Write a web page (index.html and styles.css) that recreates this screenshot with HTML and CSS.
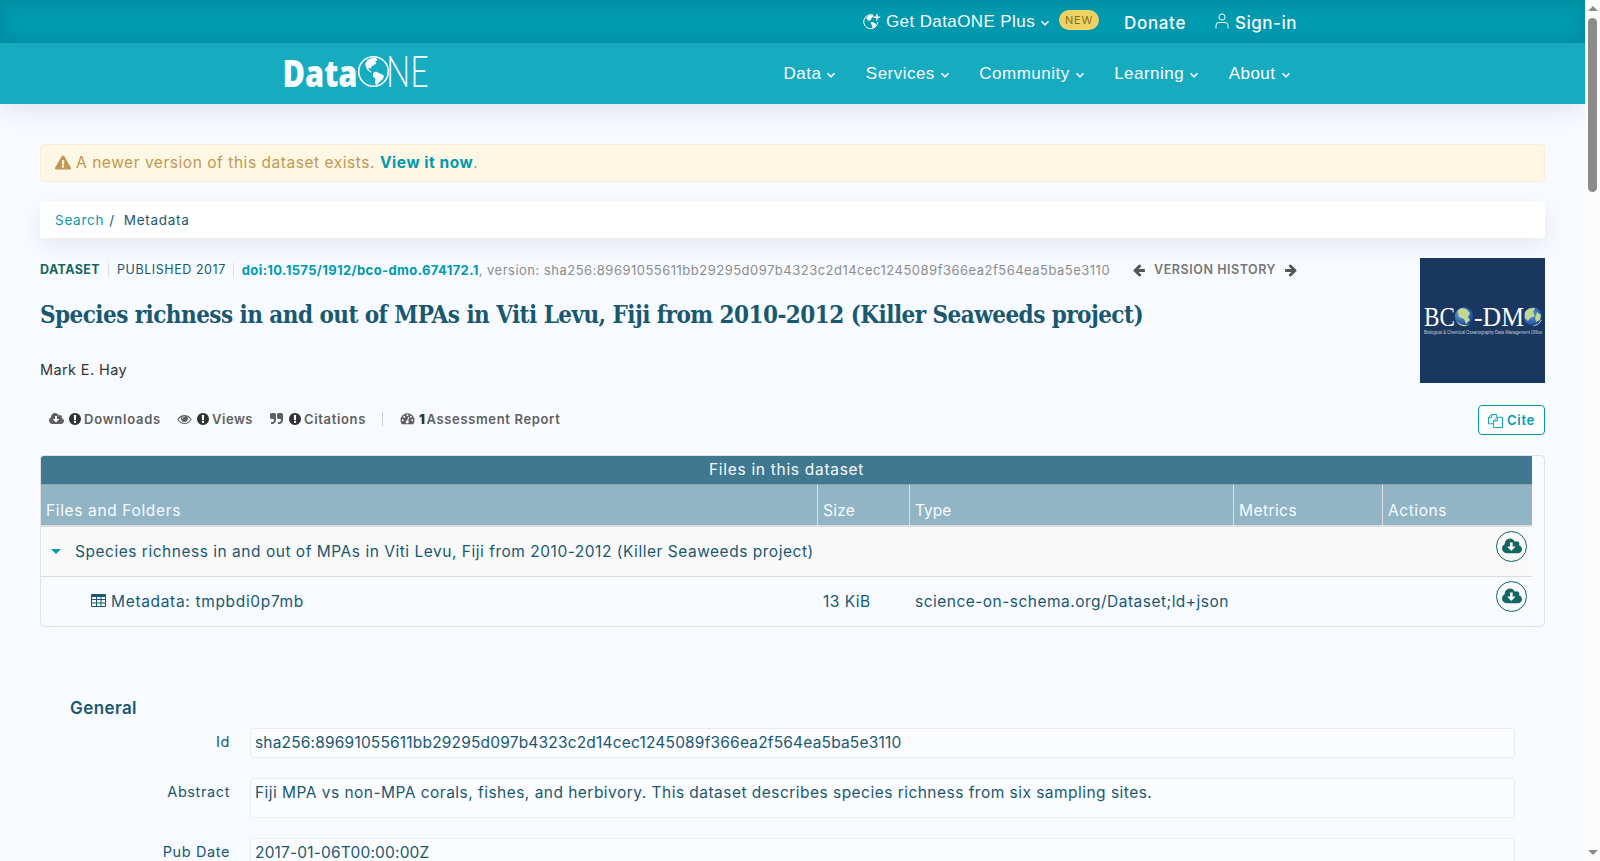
FILE: index.html
```html
<!DOCTYPE html>
<html lang="en">
<head>
  <meta charset="UTF-8" />
  <meta name="viewport" content="width=device-width, initial-scale=1" />
  <title>Species richness in and out of MPAs in Viti Levu, Fiji | DataONE</title>
  <link rel="stylesheet" href="styles.css">
</head>
<body>
  <!-- Shared icons -->
  <svg class="sprite" aria-hidden="true">
    <symbol id="chevron" viewBox="0 0 10 10"><path d="M1.500 3.200 5 6.800 8.500 3.200" fill="none" stroke="currentColor" stroke-width="1.600"/></symbol>
    <symbol id="cloud" viewBox="0 0 1920 1792"><path d="M1280 928q0-14-9-23t-23-9h-224v-352q0-13-9.500-22.500t-22.500-9.500h-192q-13 0-22.500 9.500t-9.500 22.500v352h-224q-13 0-22.500 9.500t-9.500 22.500q0 14 9 23l352 352q9 9 23 9t23-9l351-351q10-12 10-24zm640 224q0 159-112.500 271.500t-271.500 112.500h-1088q-185 0-316.500-131.500t-131.500-316.500q0-130 70-240t188-165q-2-30-2-43 0-212 150-362t362-150q156 0 285.500 87t188.500 231q71-62 166-62 106 0 181 75t75 181q0 76-41 138 130 31 213.500 135.500t83.500 238.500z"/></symbol>
    <symbol id="alert" viewBox="0 0 1792 1792"><path d="M896 128q209 0 385.500 103t279.500 279.500 103 385.500-103 385.500-279.500 279.500-385.500 103-385.500-103-279.500-279.500-103-385.500 103-385.500 279.500-279.500 385.500-103zm128 1247v-190q0-14-9-23.500t-22-9.500h-192q-13 0-23 10t-10 23v190q0 13 10 23t23 10h192q13 0 22-9.500t9-23.500zm-2-344l18-621q0-12-10-18-10-8-24-8h-220q-14 0-24 8-10 6-10 18l17 621q0 10 10 17.500t24 7.500h185q14 0 23.500-7.500t10.500-17.500z"/></symbol>
    <symbol id="arrow" viewBox="0 0 1792 1792"><path d="M1664 896v128q0 53-32.500 90.500t-84.500 37.500h-704l293 294q38 36 38 90t-38 90l-75 76q-37 37-90 37-52 0-91-37l-651-652q-37-37-37-90 0-52 37-91l651-650q38-38 91-38 52 0 90 38l75 74q38 38 38 91t-38 91l-293 293h704q52 0 84.500 37.500t32.500 90.500z"/></symbol>
  </svg>

  <div class="page">
    <header class="header">
      <div class="topbar">
        <a class="plus" href="#">
          <svg class="icon globe-plus" viewBox="0 0 18 18"><path d="M10 2.100A7 7 0 1 0 14.700 9" fill="none" stroke="currentColor" stroke-width="1"/><path d="M3 5 5.500 2.500 10 2l.5 1.500-2 1.500-.5 2-2 .5.5 1.500zM7.500 9.500l2.500-.5 3 2-1 3-2.500 1.500-.5-3zM13.200 1h1.400v2.600h2.600V5h-2.600v2.600h-1.400V5h-2.600V3.600h2.600z"/></svg>
          <span>Get DataONE Plus</span>
          <svg class="icon chevron"><use href="#chevron"/></svg>
        </a>
        <span class="badge-new">NEW</span>
        <a class="donate" href="#">Donate</a>
        <a class="signin" href="#">
          <svg class="icon" viewBox="0 0 14 16"><path d="M1 15.500V12.500Q1 9.500 4 9.500H10Q13 9.500 13 12.500V15.500" fill="none" stroke="currentColor"/><circle cx="7" cy="4" r="3.100" fill="none" stroke="currentColor"/></svg>
          <span>Sign-in</span>
        </a>
      </div>
      <nav class="navbar">
        <a class="logo" href="#">
          <svg width="146" height="36" viewBox="0 0 146 36">
            <text class="logo-data" x="-1.500" y="33" textLength="75" lengthAdjust="spacingAndGlyphs">Data</text>
            <circle cx="89.500" cy="17.500" r="14.800" fill="none" stroke="currentColor" stroke-width="1.600"/>
            <path class="logo-land" d="M81 10 83.500 6 88 4 92 3.700 93.500 6 91.500 7.500 92.500 9.500 90 11 87.500 12.500 87 14.500 84.500 13.500 85 16 88 18 86.500 18.500 83 15.500zM89 19 92 17.500 95 19 100 21.500 99 25 95.500 28 92.500 31.500 91 29 91.500 25 89 22.500z"/>
            <text class="logo-one" x="102" y="33" textLength="43" lengthAdjust="spacingAndGlyphs">NE</text>
          </svg>
        </a>
        <ul class="menu">
          <li><a href="#"><span>Data</span><svg class="icon chevron"><use href="#chevron"/></svg></a></li>
          <li><a href="#"><span>Services</span><svg class="icon chevron"><use href="#chevron"/></svg></a></li>
          <li><a href="#"><span>Community</span><svg class="icon chevron"><use href="#chevron"/></svg></a></li>
          <li><a href="#"><span>Learning</span><svg class="icon chevron"><use href="#chevron"/></svg></a></li>
          <li><a href="#"><span>About</span><svg class="icon chevron"><use href="#chevron"/></svg></a></li>
        </ul>
      </nav>
    </header>

    <main class="content">
      <div class="notice">
        <svg class="icon" viewBox="0 0 576 512"><path d="M569.517 440.013C587.975 472.007 564.806 512 527.940 512H48.054c-36.937 0-59.999-40.055-41.577-71.987L246.423 23.985c18.467-32.009 64.720-31.951 83.154 0zM288 354c-25.405 0-46 20.595-46 46s20.595 46 46 46 46-20.595 46-46-20.595-46-46-46zm-43.673-165.346l7.418 136c.347 6.364 5.609 11.346 11.982 11.346h48.546c6.373 0 11.635-4.982 11.982-11.346l7.418-136c.375-6.874-5.098-12.654-11.982-12.654h-63.383c-6.884 0-12.356 5.780-11.981 12.654z"/></svg>
        <span>A newer version of this dataset exists.</span>
        <a href="#">View it now</a><span>.</span>
      </div>

      <div class="breadcrumb">
        <a href="#">Search</a><span class="slash">/</span><span>Metadata</span>
      </div>

      <!-- Citation header -->
      <section class="summary">
        <div class="summary-text">
          <div class="meta">
            <b class="kind">DATASET</b>
            <span class="published">PUBLISHED 2017</span>
            <span class="identifier"><a href="#">doi:10.1575/1912/bco-dmo.674172.1</a>, version: sha256:89691055611bb29295d097b4323c2d14cec1245089f366ea2f564ea5ba5e3110</span>
            <span class="history">
              <svg class="icon"><use href="#arrow"/></svg>
              <b>VERSION HISTORY</b>
              <svg class="icon flip"><use href="#arrow"/></svg>
            </span>
          </div>
          <h1>Species richness in and out of MPAs in Viti Levu, Fiji from 2010-2012 (Killer Seaweeds project)</h1>
          <p class="author">Mark E. Hay</p>
        </div>
        <svg class="repo-logo" viewBox="0 0 125 125">
          <defs><radialGradient id="ocean" cx=".35" cy=".35" r=".7"><stop offset="0" stop-color="#6ba9dc"/><stop offset="1" stop-color="#173f94"/></radialGradient></defs>
          <rect width="125" height="125" fill="#1a375f"/>
          <g class="repo-name">
            <text x="4" y="67.500" textLength="31" lengthAdjust="spacingAndGlyphs">BC</text>
            <text x="54" y="67.500" textLength="50" lengthAdjust="spacingAndGlyphs">-DM</text>
          </g>
          <circle cx="44" cy="58.500" r="9.300" fill="url(#ocean)"/>
          <path d="M37.500 53 41 50 46 51 50 55 48 59 50 62 46 66 44 61 39 59zM36 63q6 6 14 3l-4 2q-7 1-10-5z" fill="#c0d892"/>
          <circle cx="113" cy="58.500" r="9.300" fill="url(#ocean)"/>
          <path d="M105 54 109 50.500 115 50 113 54 115 58 110 60 108 63 105 60zM117 54 121 57 120 62 116 64 115 60z" fill="#c0d892"/>
          <path d="M121.500 62q-2 5-8 6" fill="none" stroke="#fff" stroke-width=".7"/>
          <text class="repo-sub" x="4" y="75.500" textLength="118" lengthAdjust="spacingAndGlyphs">Biological &amp; Chemical Oceanography Data Management Office</text>
        </svg>
      </section>

      <div class="toolbar">
        <ul class="metrics">
          <li><svg class="icon"><use href="#cloud"/></svg><svg class="icon count"><use href="#alert"/></svg><span class="downloads">Downloads</span></li>
          <li><svg class="icon" viewBox="0 0 1792 1792"><path d="M1664 960q-152-236-381-353 61 104 61 225 0 185-131.500 316.500t-316.500 131.500-316.500-131.500-131.500-316.500q0-121 61-225-229 117-381 353 133 205 333.500 326.500t434.500 121.500 434.500-121.500 333.500-326.500zm-720-384q0-20-14-34t-34-14q-125 0-214.500 89.500t-89.500 214.500q0 20 14 34t34 14 34-14 14-34q0-86 61-147t147-61q20 0 34-14t14-34zm848 384q0 34-20 69-140 230-376.500 368.500t-499.500 138.500-499.500-139-376.500-368q-20-35-20-69t20-69q140-229 376.500-368t499.500-139 499.500 139 376.500 368q20 35 20 69z"/></svg><svg class="icon count"><use href="#alert"/></svg><span class="views">Views</span></li>
          <li><svg class="icon" viewBox="0 0 1792 1792"><path id="quote" d="M832 320v704q0 104-40.500 198.500t-109.500 163.500-163.500 109.500-198.500 40.500h-64q-26 0-45-19t-19-45v-128q0-26 19-45t45-19h64q106 0 181-75t75-181v-32q0-40-28-68t-68-28h-224q-80 0-136-56t-56-136v-384q0-80 56-136t136-56h384q80 0 136 56t56 136z"/><use href="#quote" x="896"/></svg><svg class="icon count"><use href="#alert"/></svg><span>Citations</span></li>
          <li class="report"><svg class="icon" viewBox="0 0 16 16"><path fill-rule="evenodd" d="M0 9.500a8 8 0 0 1 16 0q0 2.500-1.300 4.500H1.300Q0 12 0 9.500zM1.500 9.500a1.100 1.100 0 1 0 2.200 0a1.100 1.100 0 1 0-2.200 0M3.200 5.500a1.100 1.100 0 1 0 2.200 0a1.100 1.100 0 1 0-2.200 0M6.900 3.800a1.100 1.100 0 1 0 2.200 0a1.100 1.100 0 1 0-2.200 0M10.700 5.500a1.100 1.100 0 1 0 2.200 0a1.100 1.100 0 1 0-2.200 0M12.300 9.500a1.100 1.100 0 1 0 2.200 0a1.100 1.100 0 1 0-2.200 0M8.700 5.800 7.700 9.600a1.700 1.700 0 1 0 1.100.3L9.800 6z"/></svg><b class="number">1</b><span>Assessment Report</span></li>
        </ul>
        <button class="btn-cite">
          <svg class="icon" viewBox="0 0 16 16"><path d="M6 11.500H.5V5L4 1.500H9V4.500M4 1.500V5H.5M10 4.500H15.500V15.500H6V8.500zM10 4.500V8.500H6" fill="none" stroke="currentColor"/></svg>
          <span>Cite</span>
        </button>
      </div>

      <!-- Package contents -->
      <div class="files">
        <table>
          <caption>Files in this dataset</caption>
          <thead>
            <tr>
              <th class="col-name">Files and Folders</th>
              <th class="col-size">Size</th>
              <th class="col-type">Type</th>
              <th class="col-metrics">Metrics</th>
              <th class="col-actions">Actions</th>
            </tr>
          </thead>
          <tbody>
            <tr class="folder">
              <td colspan="4"><i class="caret"></i><span>Species richness in and out of MPAs in Viti Levu, Fiji from 2010-2012 (Killer Seaweeds project)</span></td>
              <td class="actions"><a class="btn-download" href="#"><svg class="icon"><use href="#cloud"/></svg></a></td>
            </tr>
            <tr>
              <td class="file"><svg class="icon" viewBox="0 0 15 13"><path fill-rule="evenodd" d="M1 0H14Q15 0 15 1V12Q15 13 14 13H1Q0 13 0 12V1Q0 0 1 0zM1 3V5H5V3zM6 3V5H9.500V3zM10.500 3V5H14V3zM1 6V8.500H5V6zM6 6V8.500H9.500V6zM10.500 6V8.500H14V6zM1 9.500V12H5V9.500zM6 9.500V12H9.500V9.500zM10.500 9.500V12H14V9.500z"/></svg><span>Metadata: tmpbdi0p7mb</span></td>
              <td>13 KiB</td>
              <td>science-on-schema.org/Dataset;ld+json</td>
              <td></td>
              <td class="actions"><a class="btn-download" href="#"><svg class="icon"><use href="#cloud"/></svg></a></td>
            </tr>
          </tbody>
        </table>
      </div>

      <section class="general">
        <h2>General</h2>
        <dl>
          <dt>Id</dt>
          <dd class="value">sha256:89691055611bb29295d097b4323c2d14cec1245089f366ea2f564ea5ba5e3110</dd>
          <dt>Abstract</dt>
          <dd class="tall">Fiji MPA vs non-MPA corals, fishes, and herbivory. This dataset describes species richness from six sampling sites.</dd>
          <dt>Pub Date</dt>
          <dd class="value">2017-01-06T00:00:00Z</dd>
        </dl>
      </section>
    </main>
  </div>

  <div class="scrollbar"><i class="up"></i><i class="thumb"></i><i class="down"></i></div>
</body>
</html>
```
FILE: styles.css
```css
* {
  box-sizing: border-box;
}

body {
  margin: 0;
  height: 861px;
  overflow: hidden;
  display: flex;
  background: #f7fbff;
  color: #1a5870;
  font-family: Inter, "Open Sans", sans-serif;
  font-size: 15.5px;
  line-height: 20px;
}

a {
  color: #009aaf;
  text-decoration: none;
}

ul, dl, p, h1, h2 {
  margin: 0;
  padding: 0;
  list-style: none;
}

span, b {
  white-space: nowrap;
}

.sprite {
  position: absolute;
  width: 0;
  height: 0;
}

.icon {
  flex: none;
  fill: currentColor;
}

.page {
  width: 1585px;
  height: 861px;
  overflow: hidden;
}

/* Header */
.header {
  color: #f7fbff;
  box-shadow: 0 5px 26px rgba(0, 0, 0, 0.1);
}

.header a {
  color: inherit;
  display: flex;
  align-items: center;
}

.topbar {
  height: 43px;
  padding-right: 288px;
  background: #009bb0;
  box-shadow: inset 0 0 20px rgba(0, 80, 90, 0.25);
  display: flex;
  justify-content: flex-end;
  align-items: center;
  font-size: 17px;
}

.chevron {
  width: 10px;
  height: 10px;
  margin: 3px 0 0 5px;
}

.plus {
  font-family: "Liberation Sans", sans-serif;
  letter-spacing: 0.4px;
}

.globe-plus {
  width: 18px;
  height: 18px;
  margin-right: 5px;
}

.badge-new {
  width: 40px;
  height: 20px;
  margin: -3px 25px 0 9px;
  border-radius: 10px;
  background: #f0d264;
  color: #85701c;
  font-size: 11px;
  letter-spacing: 0.75px;
  text-align: center;
}

.donate, .signin {
  padding-top: 2px;
  font-weight: 500;
  letter-spacing: 0.66px;
}

.signin {
  margin-left: 29px;
  letter-spacing: 0.51px;
}

.signin .icon {
  width: 14px;
  height: 16px;
  margin: -3px 6px 0 0;
}

.navbar {
  height: 61px;
  padding: 0 294.5px 0 284px;
  background: #17abc0;
  display: flex;
  justify-content: space-between;
  align-items: center;
}

.logo {
  margin-top: -4px;
}

.logo svg {
  overflow: visible;
}

.logo-data {
  font: 800 37px "Open Sans", sans-serif;
  fill: currentColor;
}

.logo-one {
  font: 300 44px Lato, sans-serif;
  fill: currentColor;
}

.logo-land {
  fill: currentColor;
}

.menu {
  display: flex;
  gap: 29.5px;
  font-family: "Liberation Sans", sans-serif;
  font-size: 17px;
  letter-spacing: 0.48px;
}

/* Notices */
.content {
  padding: 40px 40px 0;
}

.notice {
  height: 38px;
  padding: 0 14px;
  border: 1px solid #fbeed5;
  border-radius: 4px;
  background: #fef7e3;
  color: #c09853;
  display: flex;
  align-items: center;
  letter-spacing: 0.54px;
}

.notice .icon {
  width: 16px;
  height: 15px;
  margin: -2px 5px 0 0;
}

.notice a {
  margin-left: 5px;
  font-weight: 700;
}

.breadcrumb {
  height: 36px;
  margin-top: 20px;
  padding-left: 15px;
  border-radius: 3px;
  background: #fff;
  box-shadow: 0 8px 24px rgba(0, 0, 0, 0.08);
  display: flex;
  align-items: center;
  font-size: 13.5px;
  letter-spacing: 0.72px;
}

.slash {
  margin: 0 9px 0 5px;
}

/* Citation header */
.summary {
  margin-top: 20px;
  display: flex;
  justify-content: space-between;
}

.summary-text {
  width: 1270px;
}

.meta {
  height: 24px;
  display: flex;
  align-items: center;
  font-size: 12.5px;
  letter-spacing: 0.4px;
}

.kind {
  color: #146660;
}

.published {
  margin-left: 8px;
  letter-spacing: 0.56px;
}

.published, .identifier {
  border-left: 1px solid #ddd;
  padding-left: 8px;
  line-height: 14px;
}

.identifier {
  margin-left: 7px;
  color: #8c8c8c;
  font-size: 13px;
  letter-spacing: 0.49px;
}

.identifier a {
  font-weight: 700;
  letter-spacing: 0.38px;
}

.history {
  margin-left: 22px;
  display: flex;
  align-items: center;
  color: #777;
  letter-spacing: 0.55px;
}

.history .icon {
  width: 14px;
  height: 14px;
  fill: #555;
}

.history b {
  margin: 0 8px;
  font-weight: 600;
}

.flip {
  transform: scaleX(-1);
}

h1 {
  margin-top: 17px;
  font: 700 24px/32px "DejaVu Serif Condensed", "DejaVu Serif", serif;
  letter-spacing: -0.55px;
  white-space: nowrap;
}

.author {
  margin-top: 29px;
  color: #333;
  font-size: 14.5px;
  letter-spacing: 0.38px;
}

.repo-logo {
  width: 125px;
  height: 125px;
}

.repo-name {
  font: 27px "Liberation Serif", serif;
  fill: #fff;
}

.repo-sub {
  font: 5px "Liberation Sans", sans-serif;
  fill: #c6cfdc;
}

.toolbar {
  margin-top: 22px;
  height: 30px;
  display: flex;
  justify-content: space-between;
  align-items: center;
}

.metrics {
  display: flex;
  align-items: center;
  gap: 16px;
  margin-top: -2px;
  padding-left: 9px;
  color: #606060;
  font-size: 13px;
  font-weight: 600;
  letter-spacing: 0.65px;
}

.metrics li {
  display: flex;
  align-items: center;
}

.metrics .icon {
  width: 15px;
  height: 14px;
}

.metrics .count {
  width: 14px;
  margin: 0 2px 0 4px;
  fill: #333;
}

.metrics .report {
  border-left: 1px solid #ccc;
  padding-left: 17px;
  height: 14px;
}

.downloads {
  letter-spacing: 0.76px;
}

.views {
  letter-spacing: 0.52px;
}

.number {
  margin: 0 1px 0 4px;
  color: #333;
}

.btn-cite {
  width: 67px;
  height: 30px;
  padding: 0 9px;
  border: 1px solid #009aaf;
  border-radius: 4px;
  background: #fff;
  color: #009aaf;
  display: flex;
  align-items: center;
  font: 600 13px Inter, sans-serif;
  letter-spacing: 0.71px;
}

.btn-cite .icon {
  width: 15px;
  height: 15px;
  margin-right: 4px;
}

/* Files table */
.files {
  height: 172px;
  margin-top: 20px;
  padding-right: 12px;
  border: 1px solid #e0e2e4;
  border-radius: 4px;
  overflow: hidden;
}

.files table {
  width: 100%;
  border-collapse: separate;
  border-spacing: 0;
  table-layout: fixed;
}

.files caption {
  height: 28px;
  line-height: 28px;
  background: #40788f;
  color: #f7fbff;
  letter-spacing: 0.7px;
}

.files th {
  height: 43px;
  padding: 0 5px 4px;
  border-top: 1px solid #8ea5ae;
  border-bottom: 2px solid #ddd;
  background: #91b5c4;
  color: #f7fbff;
  font-weight: 400;
  text-align: left;
  vertical-align: bottom;
}

.files th + th {
  border-left: 1px solid #ddd;
}

.files .col-name {
  width: 776px;
  letter-spacing: 0.64px;
}

.col-size {
  width: 92px;
  letter-spacing: 0.23px;
}

.col-type {
  width: 324px;
}

.col-metrics {
  width: 149px;
  letter-spacing: 0.43px;
}

.col-actions {
  width: 150px;
  letter-spacing: 0.57px;
}

.files td {
  height: 49px;
  padding: 1px 6px 0;
  letter-spacing: 0.48px;
  white-space: nowrap;
  vertical-align: middle;
}

.files .folder td {
  height: 50px;
  background: #f9f9f9;
  border-bottom: 1px solid #ddd;
  letter-spacing: 0.52px;
}

.caret {
  display: inline-block;
  margin: 0 14px 3px 4px;
  border: 5px solid transparent;
  border-top-color: #009aaf;
  border-bottom: 0;
}

.files .file {
  padding-left: 50px;
  letter-spacing: 0.67px;
}

.file .icon {
  width: 15px;
  height: 13px;
  margin-right: 5px;
}

.files .actions {
  padding: 4px 5px 0 0;
  vertical-align: top;
}

.btn-download {
  width: 31px;
  height: 31px;
  margin-left: auto;
  border: 1px solid #146660;
  border-radius: 50%;
  color: #146660;
  display: flex;
  align-items: center;
  justify-content: center;
}

.btn-download .icon {
  width: 20px;
  height: 19px;
}

/* General metadata */
.general {
  padding: 70px 30px 0;
}

h2 {
  font-size: 17px;
  line-height: 22px;
  font-weight: 600;
  letter-spacing: 0.42px;
}

dl {
  display: grid;
  grid-template-columns: 160px 1265px;
  column-gap: 20px;
  row-gap: 20px;
  margin-top: 9px;
}

dt {
  padding-top: 4px;
  text-align: right;
  font-size: 14.5px;
  letter-spacing: 0.6px;
}

dd {
  height: 30px;
  margin: 0;
  padding: 4px;
  border: 1px solid #ececee;
  border-radius: 3px;
  background: #fbfcfe;
}

.value {
  letter-spacing: 0.18px;
}

.tall {
  height: 40px;
  letter-spacing: 0.47px;
}

/* Scrollbar */
.scrollbar {
  width: 15px;
  height: 861px;
  background: #fcfcfc;
  display: flex;
  flex-direction: column;
  align-items: center;
}

.scrollbar i {
  border: 5px solid transparent;
}

.scrollbar .up {
  margin-top: 6px;
  border-top: 0;
  border-bottom-color: #8b8b8b;
}

.scrollbar .thumb {
  width: 9px;
  height: 174px;
  margin-top: 7px;
  border: 0;
  border-radius: 5px;
  background: #8b8b8b;
}

.scrollbar .down {
  margin: auto 0 6px;
  border-bottom: 0;
  border-top-color: #8b8b8b;
}
```
